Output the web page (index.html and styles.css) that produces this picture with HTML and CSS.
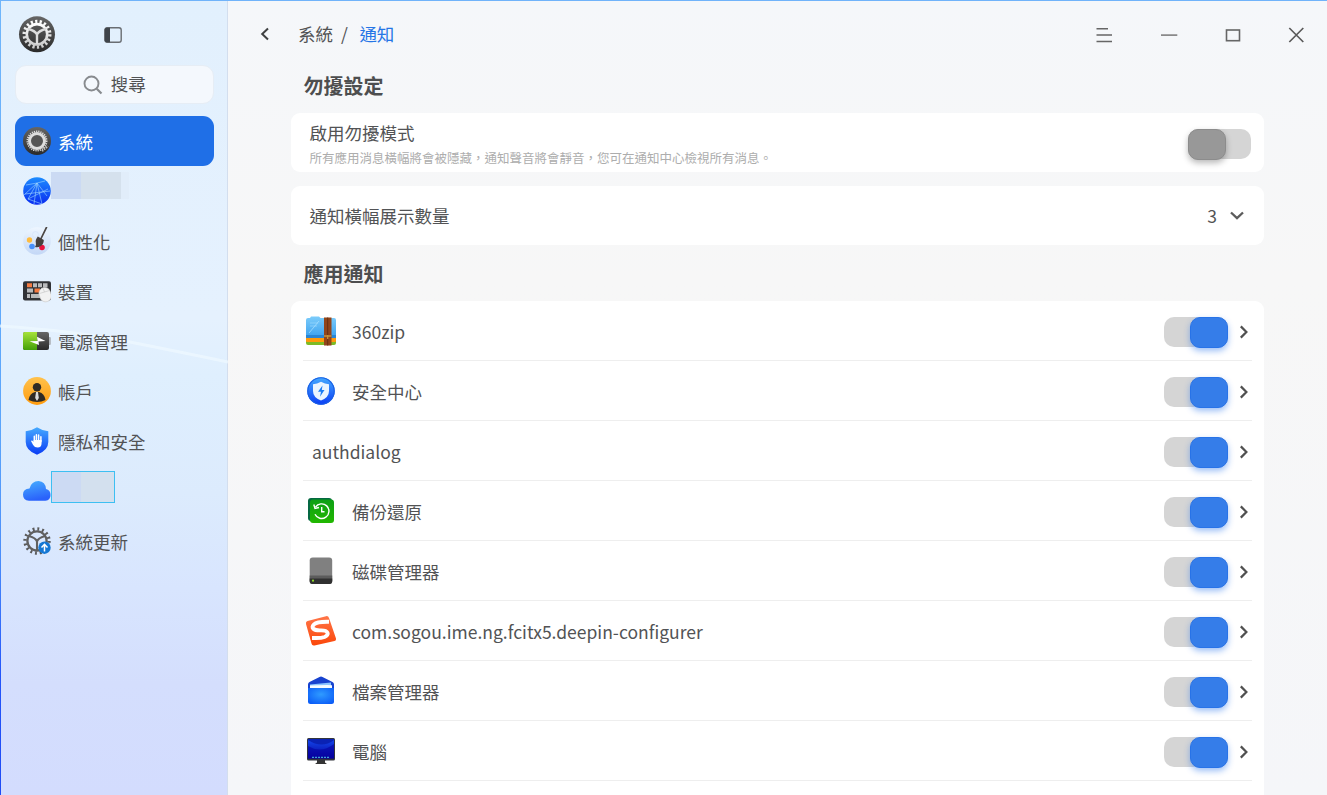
FILE: index.html
```html
<!DOCTYPE html>
<html lang="zh-Hant">
<head>
<meta charset="utf-8">
<title>通知</title>
<link rel="stylesheet" href="styles.css">
</head>
<body>
<svg class="defs" width="0" height="0" aria-hidden="true">
  <defs>
    <linearGradient id="dark" x1="0" y1="0" x2="0" y2="1"><stop offset="0" stop-color="#666"/><stop offset="1" stop-color="#2a2a2a"/></linearGradient>
    <linearGradient id="silver" x1="0" y1="0" x2="0" y2="1"><stop offset="0" stop-color="#fff"/><stop offset="1" stop-color="#cdcdcd"/></linearGradient>
    <linearGradient id="azure" x1="0" y1="0" x2="0" y2="1"><stop offset="0" stop-color="#45aaff"/><stop offset="1" stop-color="#0a3cf5"/></linearGradient>
    <linearGradient id="cloud" x1="0" y1="0" x2=".3" y2="1"><stop offset="0" stop-color="#48b0ff"/><stop offset="1" stop-color="#2a62fb"/></linearGradient>
    <linearGradient id="sky" x1="0" y1="0" x2="0" y2="1"><stop offset="0" stop-color="#7cccfb"/><stop offset="1" stop-color="#3aa0ee"/></linearGradient>
    <linearGradient id="net" x1="0" y1="0" x2="0" y2="1"><stop offset="0" stop-color="#1c8cff"/><stop offset="1" stop-color="#0a2cf0"/></linearGradient>
    <linearGradient id="pearl" x1="0" y1="0" x2="0" y2="1"><stop offset="0" stop-color="#eef6ff"/><stop offset="1" stop-color="#c3d7f6"/></linearGradient>
    <linearGradient id="lime" x1="0" y1="0" x2="0" y2="1"><stop offset="0" stop-color="#a6e23a"/><stop offset="1" stop-color="#43a008"/></linearGradient>
    <linearGradient id="amber" x1="0" y1="0" x2="0" y2="1"><stop offset="0" stop-color="#ffc24d"/><stop offset="1" stop-color="#ff9c0f"/></linearGradient>
    <linearGradient id="green" x1="0" y1="0" x2="0" y2="1"><stop offset="0" stop-color="#0d9f16"/><stop offset="1" stop-color="#22b800"/></linearGradient>
    <linearGradient id="orange" x1="0" y1="0" x2="0" y2="1"><stop offset="0" stop-color="#ff7548"/><stop offset="1" stop-color="#fb4709"/></linearGradient>
    <radialGradient id="folder" cx=".5" cy=".4" r=".7"><stop offset="0" stop-color="#2f9bff"/><stop offset="1" stop-color="#0a5bf7"/></radialGradient>
    <linearGradient id="screen" x1="0" y1="0" x2="0" y2="1"><stop offset="0" stop-color="#1549ee"/><stop offset="1" stop-color="#05009a"/></linearGradient>
    <symbol id="chev" viewBox="0 0 10 16"><path d="M1.800 2.400 7.400 8l-5.600 5.600" fill="none" stroke="#505050" stroke-width="2.200"/></symbol>
  </defs>
</svg>
<div class="window">
  <aside class="sidebar">
    <svg class="streak" viewBox="0 0 228 50" aria-hidden="true"><path d="M0 6Q75 11 130 22T228 42" fill="none" stroke="#eef8ff" stroke-width="3" opacity=".75"/></svg>
    <div class="side-top">
      <svg class="logo" viewBox="0 0 38 38"><circle cx="19" cy="19.300" r="18" fill="url(#dark)"/><circle cx="19" cy="19.300" r="12.800" fill="none" stroke="url(#silver)" stroke-width="3.400" stroke-dasharray="2.200 2.268"/><circle cx="19" cy="19.300" r="10.200" fill="none" stroke="url(#silver)" stroke-width="2.600"/><path d="M10 14Q17 15.500 19 19.500q2-4 9-5.500M19 19.500v9.500" fill="none" stroke="#dcdcdc" stroke-width="2.400"/></svg>
      <svg class="panel-icon" viewBox="0 0 18 16"><rect x=".8" y=".8" width="16.400" height="14.400" rx="2.200" fill="none" stroke="#696d72" stroke-width="1.400"/><path d="M2.500.8H6v14.400H2.500Q.8 15.200.8 13.500v-11Q.8.8 2.500.8z" fill="#3f444a"/></svg>
    </div>
    <div class="search">
      <svg class="search-icon" viewBox="0 0 20 20"><circle cx="8.500" cy="8.500" r="7" fill="none" stroke="#888b8f" stroke-width="1.900"/><path d="m13.700 13.700 4.800 4.800" stroke="#888b8f" stroke-width="2.200"/></svg>
      <span>搜尋</span>
    </div>
    <nav class="menu">
      <div class="item active">
        <svg class="ico" viewBox="0 0 28 28"><circle cx="14" cy="14" r="14" fill="url(#dark)"/><circle cx="14" cy="14" r="9.600" fill="none" stroke="#dedede" stroke-width="1.800" stroke-dasharray="1.200 1"/><circle cx="14" cy="14" r="7.500" fill="#555" stroke="#ddd" stroke-width="3"/><path d="m19 24 6-5" stroke="#bbb" stroke-width="2.200" stroke-dasharray="1.500 1"/></svg>
        <span>系統</span>
      </div>
      <div class="item">
        <svg class="ico" viewBox="0 0 28 28"><circle cx="14" cy="14" r="13.800" fill="url(#net)"/><path d="M3 8 14 6l10 13M14 6l-3 21M14 6 5 22M1 18l13-12M2 17l25-3M5 22l20-10M14 6l8-2M14 6l5 21M5 22l14 5" fill="none" stroke="#9fd6ff" stroke-width=".6"/></svg>
        <span class="mask mask-net"></span>
      </div>
      <div class="item">
        <svg class="ico" viewBox="0 0 28 28"><circle cx="14" cy="14" r="13.800" fill="url(#pearl)"/><circle cx="12.500" cy="7.500" r="3" fill="#e3effd" stroke="#d4e3f8" stroke-width=".6"/><circle cx="6.500" cy="13" r="2.700" fill="#ffbc3e"/><circle cx="9" cy="19.500" r="2.800" fill="#4790fb"/><circle cx="19" cy="20.500" r="2.800" fill="#e8123f"/><path d="M23.500.4 17.800 12" stroke="#4b4543" stroke-width="1.700" stroke-linecap="round"/><path d="m14.800 9.500 6 3.500q0 4.500-3.500 6.300-2 1.300-5.300.7 1.500-2 .8-4.500t2-6z" fill="#46403e"/></svg>
        <span>個性化</span>
      </div>
      <div class="item">
        <svg class="ico" viewBox="0 0 28 28"><rect x="0" y="4.200" width="28" height="19.300" rx="2" fill="#303236"/><path d="M10 6.200h4v4h-4zM15 6.200h4v4h-4zM20 6.200h4.500v4H20zM4 11.500h6v4H4zM18 11.500h6v4h-6zM4 17h3v4H4zM8 17h9v4H8z" fill="#b9babc"/><path d="M4 6.200h5v4H4zM11.500 11.500H17v4h-5.500z" fill="#f47b42"/><rect x="16.500" y="10.500" width="11.500" height="14.500" rx="5.700" transform="rotate(-18 22 18)" fill="#f2f2f2" stroke="#ccc" stroke-width=".6"/><path d="m16.500 16.500 10-3M20.200 11.500l1.300 3.500" fill="none" stroke="#c8c8c8" stroke-width=".7"/></svg>
        <span>裝置</span>
      </div>
      <div class="item">
        <svg class="ico" viewBox="0 0 28 28"><rect x="25" y="10" width="2.800" height="8" rx="1" fill="#aeb2b6"/><rect x="0" y="5" width="26" height="18" rx="2" fill="url(#dark)"/><path d="M2 5h12v18H2q-2 0-2-2V7q0-2 2-2z" fill="url(#lime)"/><path d="m6.500 14.300 8-.3-.5-4.300 8.500 4.200-7 .5.500 3.500z" fill="#fff"/></svg>
        <span>電源管理</span>
      </div>
      <div class="item">
        <svg class="ico" viewBox="0 0 28 28"><circle cx="14" cy="14" r="13.900" fill="url(#amber)"/><circle cx="14" cy="10.200" r="4.200" fill="#302b25"/><path d="M5.500 23q1-6.500 6.500-8h4q5.500 1.500 6.500 8-8 4-17 0z" fill="#302b25"/><path d="M13 15h2l.8 6-1.800 3-1.800-3z" fill="#ddd"/></svg>
        <span>帳戶</span>
      </div>
      <div class="item">
        <svg class="ico" viewBox="0 0 28 28"><path d="M14 .2q5.500 3.600 11.300 4V15q0 8.500-11.300 12.800Q2.700 23.500 2.700 15V4.200Q8.500 3.800 14 .2z" fill="url(#azure)"/><path d="M11.300 14.500V9.200M13.400 14V7.700M15.600 14V8M17.900 14.500v-4.700" stroke="#fff" stroke-width="1.500" stroke-linecap="round"/><path d="M10.600 13h8v3q0 4.500-4 4.500-3 0-4.500-2.500L8 14q.8-1.200 2.600 1z" fill="#fff"/></svg>
        <span>隱私和安全</span>
      </div>
      <div class="item">
        <svg class="ico" viewBox="0 0 28 28"><path d="M6 23.800q-6-.5-6-6.300 0-5.500 6.500-6Q8.500 4 15.500 4q7 .5 7.500 8 4.500.8 4.500 6 0 5.300-5 5.800z" fill="url(#cloud)"/></svg>
        <span class="mask mask-cloud"></span>
      </div>
      <div class="item">
        <svg class="ico" viewBox="0 0 28 28"><circle cx="14" cy="14" r="12" fill="none" stroke="#5a5a5a" stroke-width="3.400" stroke-dasharray="1.900 2.812"/><circle cx="14" cy="14" r="9.600" fill="none" stroke="#606060" stroke-width="2.300"/><path d="M6 9q7 2 8 5.500Q15 11 22 9M14 14v9" fill="none" stroke="#606060" stroke-width="2.100"/><circle cx="21.500" cy="20.700" r="6.200" fill="#1477d4"/><path d="M21.500 24.500v-7m-3 3 3-3.200 3 3.200" fill="none" stroke="#fff" stroke-width="1.500"/></svg>
        <span>系統更新</span>
      </div>
    </nav>
  </aside>

  <main class="content">
    <header class="titlebar">
      <svg class="back" viewBox="0 0 10 14"><path d="M8 1.500 2.200 7 8 12.500" fill="none" stroke="#3f4142" stroke-width="2"/></svg>
      <div class="crumbs"><span>系統</span><span class="slash">/</span><span class="current">通知</span></div>
      <div class="controls">
        <svg viewBox="0 0 18 18"><path d="M.500 2.700h11.500M.500 9.100h15.500M.500 15.500h15.500" stroke="#666" stroke-width="1.500"/></svg>
        <svg viewBox="0 0 18 18"><path d="M1 9.100h16.300" stroke="#777" stroke-width="1.500"/></svg>
        <svg viewBox="0 0 18 18"><rect x="2.500" y="4" width="13" height="10.700" fill="none" stroke="#666" stroke-width="1.600"/></svg>
        <svg viewBox="0 0 18 18"><path d="m1.300 2 14 14M15.300 2l-14 14" stroke="#5a5a5a" stroke-width="1.700"/></svg>
      </div>
    </header>

    <h2 class="heading first">勿擾設定</h2>
    <section class="card dnd">
      <div class="dnd-text">
        <div class="label">啟用勿擾模式</div>
        <div class="hint">所有應用消息橫幅將會被隱藏，通知聲音將會靜音，您可在通知中心檢視所有消息。</div>
      </div>
      <span class="switch off"><i></i></span>
    </section>
    <section class="card count">
      <span class="label">通知橫幅展示數量</span>
      <span class="select">3<svg class="down" viewBox="0 0 16 10"><path d="m2 1.500 6 5.700 6-5.700" fill="none" stroke="#5c5c5c" stroke-width="2.300"/></svg></span>
    </section>

    <h2 class="heading second">應用通知</h2>
    <section class="card apps">
      <div class="row">
        <svg class="app" viewBox="0 0 32 32"><rect x="1" y="19" width="30" height="11" rx="2" fill="#7dbb25"/><rect x="1" y="18" width="30" height="9" rx="1" fill="#ff9a0c"/><path d="M1 5q0-2 2-2h2l1-1.500h8L15.500 3H29q2 0 2 2v18H1z" fill="url(#sky)"/><path d="M1 20h30v3H1z" fill="#2b86d4"/><path d="m4 18 10-12" stroke="#a5ddff" stroke-width=".8"/><path d="M5 8h8M5 11h7" stroke="#a5ddff" stroke-width=".6"/><rect x="19" y="2.500" width="7.500" height="28" fill="#91451a"/><path d="M22.700 2.500v28" stroke="#692f12" stroke-width="1"/><path d="M19 21h7.500M22.700 20v4" stroke="#c8933a" stroke-width="1.300"/></svg>
        <span class="name">360zip</span><span class="switch"><i></i></span><svg class="go"><use href="#chev"/></svg>
      </div>
      <div class="row">
        <svg class="app" viewBox="0 0 32 32"><circle cx="16" cy="16" r="13.800" fill="url(#azure)"/><circle cx="16" cy="16" r="13.200" fill="none" stroke="#1a60e4" stroke-width="1.100"/><path d="M16 6.800q4 2.300 8 2.500V16q0 6.500-8 9.500-8-3-8-9.500V9.300q4-.2 8-2.500z" fill="#eaf4ff"/><path d="m17.500 10.500-4.500 6.200h3l-1 5 4.500-6.700h-2.700z" fill="#1a7cf5"/></svg>
        <span class="name">安全中心</span><span class="switch"><i></i></span><svg class="go"><use href="#chev"/></svg>
      </div>
      <div class="row plain">
        <span class="name">authdialog</span><span class="switch"><i></i></span><svg class="go"><use href="#chev"/></svg>
      </div>
      <div class="row">
        <svg class="app" viewBox="0 0 32 32"><rect x="3" y="3" width="24" height="23" rx="3" fill="#056842"/><rect x="5" y="4.500" width="24" height="23.500" rx="3" fill="url(#green)"/><path d="M10.500 12.200a7.300 7.300 0 1 1-.5 7" fill="none" stroke="#fff" stroke-width="1.400"/><path d="m8.800 9.500 1.200 4 4-1" fill="none" stroke="#fff" stroke-width="1.400"/><path d="M16.700 12v4.800h2.800" fill="none" stroke="#fff" stroke-width="1.400"/></svg>
        <span class="name">備份還原</span><span class="switch"><i></i></span><svg class="go"><use href="#chev"/></svg>
      </div>
      <div class="row">
        <svg class="app" viewBox="0 0 32 32"><rect x="4.700" y="2.500" width="22.500" height="26.500" rx="3" fill="#808080"/><path d="M4.700 20.500h22.500V26q0 3-3 3H7.700q-3 0-3-3z" fill="#5c5c5c"/><path d="M4.700 23.500h22.500V26q0 3-3 3H7.700q-3 0-3-3z" fill="#303030"/><circle cx="8" cy="25.700" r="1.100" fill="#8fdd2a"/></svg>
        <span class="name">磁碟管理器</span><span class="switch"><i></i></span><svg class="go"><use href="#chev"/></svg>
      </div>
      <div class="row">
        <svg class="app" viewBox="0 0 32 32"><path d="M2.500 6 21 1.200q2.300-.5 3 1.700l7 20.500q.5 2-1.500 2.600L9.500 30.500q-2.500.5-3-2L1 9q-.5-2.300 1.500-3z" fill="url(#orange)"/><path d="M24 6.800Q12 6.500 9 9.400c-3.500 3.400-.5 6.200 6.500 6 8-.2 9.500 4.300 4 6.600-4 1.500-8 1-12.500 1" fill="none" stroke="#fff" stroke-width="3.900"/></svg>
        <span class="name">com.sogou.ime.ng.fcitx5.deepin-configurer</span><span class="switch"><i></i></span><svg class="go"><use href="#chev"/></svg>
      </div>
      <div class="row">
        <svg class="app" viewBox="0 0 32 32"><path d="M3 9.500q0-1.700 1.500-2.500L14.500 2q1.500-.8 3 0l10 5q1.500.8 1.500 2.500V16H3z" fill="#1742cf"/><path d="M5 9.500 26 7.500V14H5z" fill="#8cc6ff"/><path d="M5 10.500l17-.5 5 .2V16H5z" fill="#f5fbff"/><path d="M3 13h26v13.500q0 2.500-2.500 2.500h-21Q3 29 3 26.500z" fill="url(#folder)"/></svg>
        <span class="name">檔案管理器</span><span class="switch"><i></i></span><svg class="go"><use href="#chev"/></svg>
      </div>
      <div class="row">
        <svg class="app" viewBox="0 0 32 32"><path d="M12 24h8v3.500l2 1.500H10l2-1.500z" fill="#333"/><rect x="2" y="3" width="28" height="22.500" rx="1.500" fill="#33353c"/><rect x="3" y="4" width="26" height="19.500" fill="url(#screen)"/><path d="M3 4h26v1Q17 14 3 5z" fill="#0a22b4"/><path d="M3 11q13 8 26-2v14.500H3z" fill="#0600a0" opacity=".6"/><path d="M7 22.300h18" stroke="#3d9fd8" stroke-width="1.300" stroke-dasharray="2 1"/></svg>
        <span class="name">電腦</span><span class="switch"><i></i></span><svg class="go"><use href="#chev"/></svg>
      </div>
      <div class="row"></div>
    </section>
  </main>
</div>
</body>
</html>
```
FILE: styles.css
```css
* { box-sizing: border-box; }
body {
  margin: 0;
  overflow: hidden;
  font-family: "Noto Sans CJK TC", "Noto Sans", sans-serif;
  font-size: 17.5px;
  line-height: 26px;
  color: #525355;
}
svg { display: block; flex: none; }
.defs { position: absolute; }
.window {
  display: flex;
  width: 1327px;
  height: 795px;
  overflow: hidden;
  background: linear-gradient(#f5f7fa, #f7f7f7 35%, #f5f6f9);
  border-top: 1px solid #70b3fa;
}

.sidebar {
  position: relative;
  width: 228px;
  flex: none;
  padding: 14px 13px 0 14.5px;
  background:
    linear-gradient(#70b6fb, #5aa4fb 55%, #4a8dfa 70%, #2455fa 85%, #1f4bf5) left / 1px 100% no-repeat,
    linear-gradient(#e2f0fd, #e5f1fe 40%, #dfeffe 47%, #dcebfd 62%, #d8e5fe 74%, #d4defd 86%, #d3dcfe);
  border-right: 1px solid #d3deee;
}
.streak { position: absolute; left: 0; top: 319px; width: 228px; height: 50px; }
.side-top { display: flex; align-items: center; gap: 48px; height: 38px; padding-left: 3.5px; }
.logo { width: 38px; height: 38px; }
.panel-icon { width: 18px; height: 16px; margin-top: 1px; }
.search {
  display: flex;
  align-items: center;
  justify-content: center;
  gap: 8px;
  height: 39px;
  margin: 12px 0 0;
  border: 1px solid #e6edf5;
  border-radius: 11px;
  background: #f4f8fd;
}
.search-icon { width: 20px; height: 20px; }
.search span { margin-top: -1px; }
.menu { position: relative; margin-top: 12px; }
.item { display: flex; align-items: center; gap: 7px; height: 50px; padding-left: 8.5px; }
.item > span { padding-top: 1px; }
.active { border-radius: 11px; background: #1f6fe7; color: #fff; }
.ico { width: 28px; height: 28px; }
.item .mask { padding: 0; margin-left: -7.5px; }
.mask-net {
  width: 78px;
  height: 27px;
  margin-top: -11px;
  background: linear-gradient(90deg, #cbdaf3 30px, #d5e1ed 30px 70px, #e1edfa 70px);
}
.mask-cloud {
  width: 64px;
  height: 32px;
  margin-top: -9px;
  border: 1px solid #3dbff2;
  background: linear-gradient(90deg, #ccdaf3 29px, #d3e0ee 29px);
}

.content { flex: 1; min-width: 0; }
.titlebar { display: flex; align-items: center; height: 66px; padding: 0 21px 0 31.5px; }
.back { width: 10px; height: 14px; }
.crumbs { display: flex; margin-left: 28.5px; }
.slash { margin: 0 11.5px 0 8px; }
.current { color: #2575e6; }
.controls { display: flex; gap: 46px; margin-left: auto; padding-top: 2px; }
.controls svg { width: 18px; height: 18px; }
.heading { margin: 0 0 0 75.5px; font-size: 20px; line-height: 30px; font-weight: 700; color: #4d4e4f; }
.first { margin-top: 4px; }
.second { margin-top: 14px; }
.card { width: 973px; margin-left: 63px; border-radius: 9px; background: #fff; }
.dnd { display: flex; justify-content: space-between; height: 59px; margin-top: 12px; padding: 7px 13px 0 18.5px; }
.hint { font-size: 12.5px; line-height: 20px; color: #adadad; margin-top: 2px; }
.dnd .switch { margin-top: 9px; }
.count { display: flex; align-items: center; justify-content: space-between; height: 59px; margin-top: 14px; padding: 1px 19px 0 18.5px; }
.select { display: flex; align-items: center; gap: 12px; }
.down { width: 16px; height: 10px; }
.apps { margin-top: 12px; padding: 0 12px; }
.row { display: flex; align-items: center; height: 60px; border-bottom: 1px solid #eee; padding-left: 2px; }
.row.plain { padding-left: 9px; }
.app { width: 32px; height: 32px; margin: 1px 15px 0 0; }
.name { flex: 1; padding-top: 2px; }
.switch {
  display: flex;
  justify-content: flex-end;
  width: 64px;
  height: 30px;
  margin-top: 2px;
  border-radius: 10px;
  background: #d5d5d5;
}
.switch i {
  width: 38px;
  height: 31px;
  border: 1px solid #2873e8;
  border-radius: 10px;
  background: #357de9;
  box-shadow: 0 3px 6px rgba(36, 113, 234, .45);
}
.off { width: 63px; justify-content: flex-start; }
.off i { border-color: #8c8c8c; background: #989898; box-shadow: 0 3px 6px rgba(0, 0, 0, .28); }
.go { width: 10px; height: 16px; margin: 3px 3px 0 11px; }
```
